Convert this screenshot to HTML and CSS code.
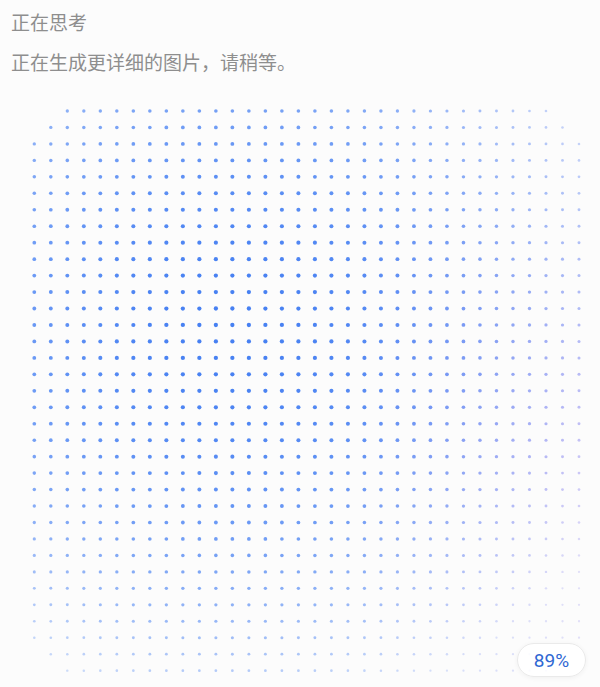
FILE: index.html
```html
<!DOCTYPE html>
<html lang="zh">
<head>
<meta charset="utf-8">
<title>正在思考</title>
<link rel="stylesheet" href="styles.css">
</head>
<body>
<div class="page">
  <div class="title">正在思考</div>
  <div class="msg">正在生成更详细的图片，请稍等。</div>
  <div class="stage">
    <svg class="dots" id="dots" width="600" height="612" viewBox="0 0 600 612" xmlns="http://www.w3.org/2000/svg"></svg>
    <div class="badge">89%</div>
  </div>
</div>
<script src="script.js"></script>
</body>
</html>
```

FILE: styles.css
```css
html, body {
  margin: 0;
  padding: 0;
  background: #fcfcfc;
  overflow: hidden;
}
.page {
  width: 600px;
  height: 687px;
  display: flex;
  flex-direction: column;
  font-family: "Noto Sans CJK SC", "Noto Sans", sans-serif;
}
.title {
  margin: 9px 0 0 11px;
  font-size: 19px;
  line-height: 26px;
  color: #8e8e8e;
}
.msg {
  margin: 14px 0 0 11px;
  font-size: 19px;
  line-height: 26px;
  color: #8e8e8e;
}
.stage {
  position: relative;
  height: 612px;
  flex: none;
}
.dots {
  display: block;
}
.badge {
  position: absolute;
  right: 14px;
  bottom: 10px;
  width: 67px;
  height: 32px;
  border: 1px solid #eaeaea;
  border-radius: 17px;
  background: rgba(255, 255, 255, 0.88);
  box-shadow: 0 1px 5px rgba(0, 0, 0, 0.05);
  display: flex;
  align-items: center;
  justify-content: center;
  font-family: Roboto, "Liberation Sans", sans-serif;
  font-size: 19px;
  color: #2f68d3;
}
```

FILE: script.js
```js
(function () {
  var svg = document.getElementById('dots');
  var NS = 'http://www.w3.org/2000/svg';
  var cols = 34, rows = 35;
  var x0 = 34.3, dx = 16.506, y0 = 36, dy = 16.46;
  function clamp(v, a, b) { return Math.max(a, Math.min(b, v)); }
  function range(j) {
    if (j === 0 || j === rows - 1) return [2, cols - 3];
    if (j === 1 || j === rows - 2) return [1, cols - 2];
    return [0, cols - 1];
  }
  var blue = [70, 128, 242], purple = [150, 118, 236];
  for (var j = 0; j < rows; j++) {
    var r = range(j);
    for (var i = r[0]; i <= r[1]; i++) {
      var u = i / (cols - 1), v = j / (rows - 1);
      var ddx = u - 0.35, ddy = v - 0.38;
      var ax = ddx > 0 ? ddx / 0.72 : -ddx / 0.62;
      var ay = ddy > 0 ? ddy / 0.66 : -ddy / 0.62;
      var I = clamp(1 - ax * ax * 0.7 - ay * ay * 0.8, 0.08, 1);
      var m = Math.pow(clamp((u - 0.55) / 0.45, 0, 1), 1.5) * 0.75 * clamp(v * 1.6, 0.25, 1);
      var col = [0, 1, 2].map(function (k) {
        return Math.round(blue[k] + (purple[k] - blue[k]) * m);
      });
      var c = document.createElementNS(NS, 'circle');
      c.setAttribute('cx', (x0 + i * dx).toFixed(2));
      c.setAttribute('cy', (y0 + j * dy).toFixed(2));
      c.setAttribute('r', (1.05 + 1.1 * I).toFixed(2));
      c.setAttribute('fill', 'rgb(' + col.join(',') + ')');
      c.setAttribute('fill-opacity', (0.15 + 0.85 * I).toFixed(3));
      svg.appendChild(c);
    }
  }
})();
```
